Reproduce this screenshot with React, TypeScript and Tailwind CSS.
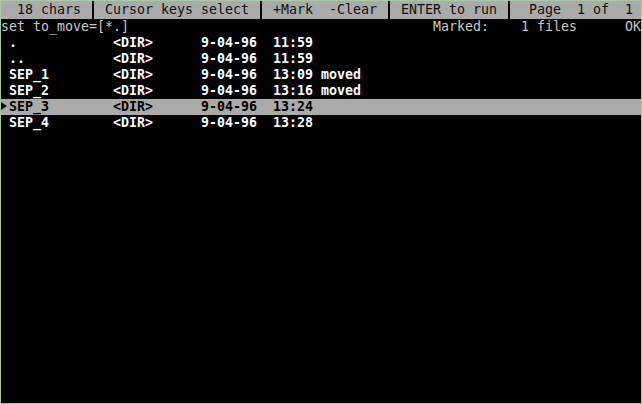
const rows = [
  { name: ".", date: "9-04-96", time: "11:59", note: "" },
  { name: "..", date: "9-04-96", time: "11:59", note: "" },
  { name: "SEP_1", date: "9-04-96", time: "13:09", note: "moved" },
  { name: "SEP_2", date: "9-04-96", time: "13:16", note: "moved" },
  { name: "SEP_3", date: "9-04-96", time: "13:24", note: "", current: true },
  { name: "SEP_4", date: "9-04-96", time: "13:28", note: "" },
];

// one header cell, widths in 8px character columns
function Cell({ w, text }: { w: string; text: string }) {
  return <div className={`${w} whitespace-pre`}>{text}</div>;
}

function Sep() {
  return (
    <div className="w-[8px] h-full flex justify-center">
      <div className="w-[2px] h-full bg-black" />
    </div>
  );
}

export default function App() {
  return (
    <div className="w-[642px] h-[404px] border border-[#a8c8a8] bg-black font-['DejaVu_Sans_Mono',monospace] text-[13.29px] leading-4">
      {/* status bar */}
      <div className="h-[18px] bg-[#aaaaaa] text-[#101010] flex items-center">
        <Cell w="w-[88px]" text="  18 chars " />
        <Sep />
        <Cell w="w-[160px]" text=" Cursor keys select " />
        <Sep />
        <Cell w="w-[120px]" text=" +Mark  -Clear " />
        <Sep />
        <Cell w="w-[112px]" text=" ENTER to run " />
        <Sep />
        <Cell w="w-[128px]" text="  Page  1 of  1 " />
      </div>

      {/* filter line */}
      <div className="h-4 flex text-[#c8c8c8] whitespace-pre">
        <div className="w-[432px]">set to_move=[*.]</div>
        <div className="w-[88px]">Marked:</div>
        <div className="w-[104px]">1 files</div>
        <div>OK</div>
      </div>

      {/* file list */}
      {rows.map((r) => (
        <div
          key={r.name}
          className={`h-4 flex font-bold whitespace-pre ${
            r.current ? "bg-[#aaaaaa] text-black" : "text-white"
          }`}
        >
          <div className="w-[8px] h-4">
            {r.current && (
              <svg width="8" height="16" viewBox="0 0 8 16">
                <polygon points="0,3 6,7 0,11" fill="#000" />
              </svg>
            )}
          </div>
          <div className="w-[104px]">{r.name}</div>
          <div className="w-[88px]">&lt;DIR&gt;</div>
          <div className="w-[72px]">{r.date}</div>
          <div className="w-[48px]">{r.time}</div>
          <div>{r.note}</div>
        </div>
      ))}
    </div>
  );
}
